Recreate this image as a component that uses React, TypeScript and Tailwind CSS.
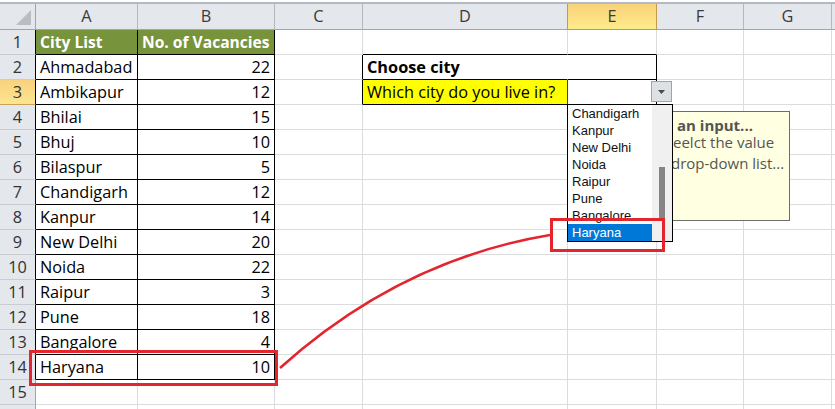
import React from 'react';

const COLS = 'grid grid-cols-[36px_102px_137px_88px_205px_89px_87px_88px_3px]';

const cities: [string, number][] = [
    ['Ahmadabad', 22],
    ['Ambikapur', 12],
    ['Bhilai', 15],
    ['Bhuj', 10],
    ['Bilaspur', 5],
    ['Chandigarh', 12],
    ['Kanpur', 14],
    ['New Delhi', 20],
    ['Noida', 22],
    ['Raipur', 3],
    ['Pune', 18],
    ['Bangalore', 4],
    ['Haryana', 10],
];

const listItems = ['Chandigarh', 'Kanpur', 'New Delhi', 'Noida', 'Raipur', 'Pune', 'Bangalore', 'Haryana'];

const cell = 'border-r border-b pt-px leading-[23px] whitespace-nowrap px-[4px]';

// row header (numbers on the left)
const rowHead = (r: number) => {
    if (r === 3) return 'border-r border-b border-r-black border-b-[#c9a15c] bg-linear-to-b from-[#f8d27e] to-[#fde58f] text-center text-[#333] pt-px leading-[23px]';
    if (r <= 14) return 'border-r border-b border-r-black border-b-[#c8ccd2] bg-[#e4e7ec] text-center text-[#333] pt-px leading-[23px]';
    return 'border-r border-b border-r-[#9fa5ad] border-b-[#c8ccd2] bg-[#e4e7ec] text-center text-[#333] pt-px leading-[23px]';
};

const colA = (r: number) => {
    if (r === 1) return `${cell} border-black bg-[#77933c] text-white font-bold text-[15.6px]`;
    if (r <= 14) return `${cell} border-black`;
    return `${cell} border-[#dadcdd]`;
};

const colB = (r: number) => {
    if (r === 1) return `${cell} border-black bg-[#77933c] text-white font-bold text-[15.6px]`;
    if (r <= 14) return `${cell} border-black text-right`;
    return `${cell} border-[#dadcdd]`;
};

const colC = (r: number) => {
    if (r === 2 || r === 3) return `${cell} border-r-black border-b-[#dadcdd]`;
    return `${cell} border-[#dadcdd]`;
};

const colD = (r: number) => {
    if (r === 1) return `${cell} border-r-[#dadcdd] border-b-black`;
    if (r === 2) return `${cell} border-r-white border-b-black font-bold`;
    if (r === 3) return `${cell} border-r-[#2030e0] border-b-black bg-[#ffff00]`;
    return `${cell} border-[#dadcdd]`;
};

const colE = (r: number) => {
    if (r === 1) return `${cell} border-r-[#dadcdd] border-b-black`;
    if (r === 2 || r === 3) return `${cell} border-black`;
    return `${cell} border-[#dadcdd]`;
};

const plain = `${cell} border-[#dadcdd]`;

const App: React.FC = () => {
    const rows = Array.from({ length: 15 }, (_, i) => i + 1);

    return (
        <div className="relative w-[835px] h-[409px] overflow-hidden bg-white font-['Open_Sans',sans-serif] text-[16.3px] text-black">
            {/* column headers */}
            <div className="h-[2px] bg-white" />
            <div className="h-[2px] bg-[#b4bac3]" />
            <div className={`${COLS} h-[26px] bg-[#e4e7ec] text-[#3a3a3a] text-center leading-[25px]`}>
                <div className="relative border-r border-b border-[#9fa5ad]">
                    <svg className="absolute left-0 top-0" width="35" height="25">
                        <polygon points="31,6 31,21 16,21" fill="#b9bec5" />
                    </svg>
                </div>
                <div className="border-r border-b border-r-[#b3b8bf] border-b-[#9fa5ad]">A</div>
                <div className="border-r border-b border-r-[#b3b8bf] border-b-[#9fa5ad]">B</div>
                <div className="border-r border-b border-r-[#b3b8bf] border-b-[#9fa5ad]">C</div>
                <div className="border-r border-b border-r-[#c39a4a] border-b-[#9fa5ad]">D</div>
                <div className="border-r border-b border-[#c39a4a] bg-linear-to-b from-[#f9d27a] to-[#ffec8c]">E</div>
                <div className="border-r border-b border-r-[#b3b8bf] border-b-[#9fa5ad]">F</div>
                <div className="border-r border-b border-r-[#b3b8bf] border-b-[#9fa5ad]">G</div>
                <div className="border-b border-[#9fa5ad]" />
            </div>

            {/* sheet rows */}
            {rows.map((r) => {
                const city = r >= 2 && r <= 14 ? cities[r - 2] : null;
                return (
                    <div key={r} className={`${COLS} h-[25px]`}>
                        <div className={rowHead(r)}>{r}</div>
                        <div className={colA(r)}>{r === 1 ? 'City List' : city ? city[0] : ''}</div>
                        <div className={colB(r)}>{r === 1 ? 'No. of Vacancies' : city ? city[1] : ''}</div>
                        <div className={colC(r)} />
                        <div className={colD(r)}>
                            {r === 2 ? 'Choose city' : r === 3 ? 'Which city do you live in?' : ''}
                        </div>
                        <div className={colE(r)} />
                        <div className={plain} />
                        <div className={plain} />
                        <div className="border-b border-[#dadcdd]" />
                    </div>
                );
            })}
            {/* next row, cut by the window edge */}
            <div className={`${COLS} h-[5px]`}>
                <div className="border-r border-r-[#9fa5ad] bg-[#e4e7ec]" />
                <div className="border-r border-[#dadcdd]" />
                <div className="border-r border-[#dadcdd]" />
                <div className="border-r border-[#dadcdd]" />
                <div className="border-r border-[#dadcdd]" />
                <div className="border-r border-[#dadcdd]" />
                <div className="border-r border-[#dadcdd]" />
                <div className="border-r border-[#dadcdd]" />
                <div />
            </div>

            {/* drop-down arrow button */}
            <div className="absolute left-[651px] top-[81px] z-20 flex h-[21px] w-[21px] items-center justify-center border border-[#9fa3aa] bg-[#dde0e5]">
                <svg width="7" height="4" viewBox="0 0 7 4">
                    <polygon points="0,0 7,0 3.5,4" fill="#4a4a4a" />
                </svg>
            </div>

            {/* input message tooltip */}
            <div className="absolute left-[672px] top-[111px] z-10 h-[110px] w-[118px] overflow-hidden border border-[#6d6d6d] bg-[#ffffe1] pt-[5px] text-[15px] text-[#555] leading-[17px] whitespace-nowrap">
                <div className="ml-[4px] font-bold">an input...</div>
                <div>eelct the value</div>
                <div className="mt-[4px] ml-[-2px]">drop-down list...</div>
            </div>

            {/* drop-down list */}
            <div className="absolute left-[567px] top-[104px] z-20 flex h-[138px] w-[106px] border border-black bg-white font-['Liberation_Sans',Arial,sans-serif] text-[13px] text-[#111]">
                <div className="w-[84px]">
                    {listItems.map((item) => (
                        <div
                            key={item}
                            className={`h-[17px] pl-[4px] leading-[17px] whitespace-nowrap ${item === 'Haryana' ? 'bg-[#0078d7] text-white' : ''}`}
                        >
                            {item}
                        </div>
                    ))}
                </div>
                <div className="relative w-[20px] bg-[#f0f0f0]">
                    <div className="absolute left-[7px] top-[62px] h-[51px] w-[6px] bg-[#858585]" />
                </div>
            </div>

            {/* red highlight boxes and connector */}
            <div className="absolute left-[29px] top-[350px] z-30 h-[36px] w-[249px] border-[3px] border-[#e3262e]" />
            <div className="absolute left-[550px] top-[218px] z-30 h-[34px] w-[115px] border-[3px] border-[#e3262e]" />
            <svg className="pointer-events-none absolute left-0 top-0 z-30" width="835" height="409">
                <path d="M280 368 Q400 260 550 235" fill="none" stroke="#e3262e" strokeWidth="2.6" />
            </svg>
        </div>
    );
};

export default App;
